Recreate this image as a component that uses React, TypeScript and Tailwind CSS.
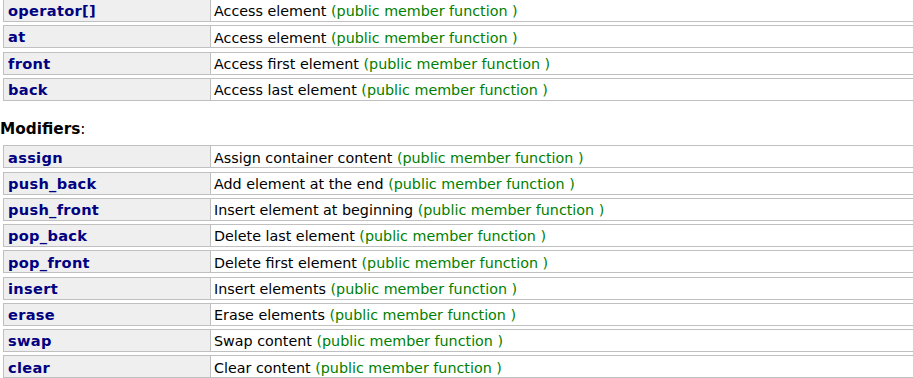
import React from "react";

const access = [
  ["operator[]", "Access element"],
  ["at", "Access element"],
  ["front", "Access first element"],
  ["back", "Access last element"],
];

const modifiers = [
  ["assign", "Assign container content"],
  ["push_back", "Add element at the end"],
  ["push_front", "Insert element at beginning"],
  ["pop_back", "Delete last element"],
  ["pop_front", "Delete first element"],
  ["insert", "Insert elements"],
  ["erase", "Erase elements"],
  ["swap", "Swap content"],
  ["clear", "Clear content"],
];

function Row({ name, desc }: { name: string; desc: string }) {
  return (
    <div className="flex h-[23px] w-[940px] ml-[3px] mb-[3.25px]">
      <div className="w-[208px] shrink-0 bg-[#efefef] border border-[#c0c0c0] flex items-center pl-[4px] pt-[2px]">
        <span className="font-bold text-[14.6px] tracking-[0.3px] text-[#000080]">{name}</span>
      </div>
      <div className="flex-1 border border-l-0 border-[#c0c0c0] bg-white flex items-center pl-[3px] pt-[2px] text-black">
        <span>
          {desc} <span className="text-[#008000]">(public member function )</span>
        </span>
      </div>
    </div>
  );
}

export default function App() {
  return (
    <div
      className="w-[913px] h-[378px] overflow-hidden bg-white text-[14.3px] leading-none"
      style={{ fontFamily: '"DejaVu Sans", Verdana, sans-serif' }}
    >
      <div className="mt-[-1px]">
        {access.map(([n, d]) => (
          <Row key={n} name={n} desc={d} />
        ))}
      </div>
      <div className="pt-[18px] pb-[8px] text-[15.3px] text-black">
        <span className="font-bold">Modifiers</span>:
      </div>
      <div>
        {modifiers.map(([n, d]) => (
          <Row key={n} name={n} desc={d} />
        ))}
      </div>
    </div>
  );
}
